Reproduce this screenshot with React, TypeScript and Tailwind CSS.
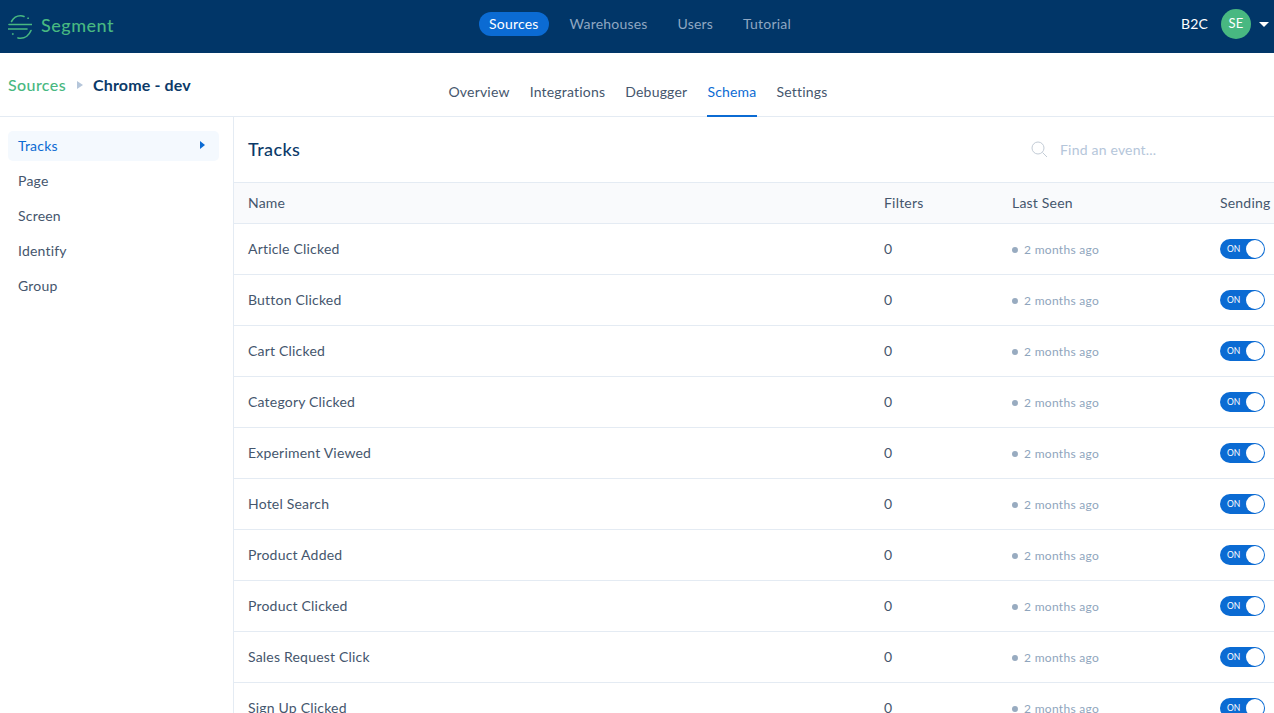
const EVENTS = [
  "Article Clicked",
  "Button Clicked",
  "Cart Clicked",
  "Category Clicked",
  "Experiment Viewed",
  "Hotel Search",
  "Product Added",
  "Product Clicked",
  "Sales Request Click",
  "Sign Up Clicked",
];

const TOP_NAV = ["Warehouses", "Users", "Tutorial"];
const TABS = ["Overview", "Integrations", "Debugger", "Schema", "Settings"];
const SIDE = ["Tracks", "Page", "Screen", "Identify", "Group"];

function Logo() {
  return (
    <svg width="24" height="24" viewBox="0 0 24 24" fill="none" stroke="#48b881" strokeWidth="1.6" strokeLinecap="round">
      <path d="M1 9.500H23.500" />
      <path d="M0.500 14H19" />
      <path d="M3.500 6.500C5.500 2.800 9 .8 12.500 .8c1.300 0 2.500.2 3.500.6" />
      <path d="M23 15.500C21.200 20 17 23.200 12.500 23.200c-1 0-1.800-.1-2.500-.3" />
      <circle cx="20" cy="3.200" r="0.500" fill="#48b881" strokeWidth="0.800" />
      <circle cx="4.700" cy="19" r="0.500" fill="#48b881" strokeWidth="0.800" />
    </svg>
  );
}

function Toggle() {
  return (
    <div className="flex h-[20px] w-[45px] items-center justify-between rounded-full bg-[#0b6bd3] pl-[7px] pr-[1px]">
      <span className="text-[8.500px] leading-none tracking-normal text-white">ON</span>
      <span className="h-[18px] w-[18px] rounded-full bg-white" />
    </div>
  );
}

export default function App() {
  return (
    <div className="h-[713px] w-[1274px] overflow-hidden bg-white font-['Lato',sans-serif] text-[14px] tracking-[0.2px] text-[#45566d]">
      {/* top bar */}
      <header className="relative flex h-[53px] items-center justify-center bg-[#013668] pb-[5px] pr-[4px]">
        <div className="absolute left-[8px] top-[12px] flex items-center gap-[9px]">
          <Logo />
          <span className="pb-[2px] text-[18px] font-medium tracking-[0.5px] text-[#48b881]">Segment</span>
        </div>
        <nav className="flex h-[24px] items-center gap-[30px] text-[#8fa7c2]">
          <span className="-mr-[9px] flex h-[24px] items-center rounded-full bg-[#0b6bd3] px-[10px] pb-px text-white">Sources</span>
          {TOP_NAV.map(item => (
            <span key={item} className="pb-px">{item}</span>
          ))}
        </nav>
        <div className="absolute right-[5px] top-[9px] flex items-center text-white">
          <span className="mr-[13px] pb-[2px]">B2C</span>
          <span className="flex h-[30px] w-[30px] items-center justify-center rounded-full bg-[#48b881] text-[13px]">SE</span>
          <span className="ml-[8px] h-0 w-0 border-x-[5px] border-t-[5px] border-x-transparent border-t-white" />
        </div>
      </header>

      {/* sub header */}
      <div className="relative flex h-[64px] justify-center border-b border-[#e4ebf3] pl-[2px]">
        <div className="absolute left-[8px] top-[20px] flex items-center text-[16px] tracking-[0.4px]">
          <span className="font-medium text-[#48b881]">Sources</span>
          <span className="ml-[11px] mr-[10px] h-0 w-0 border-y-[4px] border-l-[6px] border-y-transparent border-l-[#b5c6da]" />
          <span className="font-bold tracking-[0.15px] text-[#0b3a69]">Chrome - dev</span>
        </div>
        <div className="flex items-stretch gap-[20px] pt-[28px]">
          {TABS.map(tab => (
            <span
              key={tab}
              className={tab === "Schema" ? "-mb-px border-b-2 border-[#0b6bd3] text-[#0b6bd3]" : ""}
            >
              {tab}
            </span>
          ))}
        </div>
      </div>

      <div className="flex">
        {/* sidebar */}
        <aside className="h-[596px] w-[234px] shrink-0 border-r border-[#e4ebf3] px-[8px] pt-[14px]">
          {SIDE.map(item => (
            <div
              key={item}
              className={
                item === "Tracks"
                  ? "flex h-[30px] w-[211px] items-center justify-between rounded-[5px] bg-[#f4f9fe] pb-[2px] pl-[10px] pr-[14px] text-[#0b6bd3]"
                  : "mt-[5px] flex h-[30px] items-center pb-[2px] pl-[10px]"
              }
            >
              {item}
              {item === "Tracks" && (
                <span className="h-0 w-0 border-y-[4px] border-l-[5px] border-y-transparent border-l-[#0b6bd3]" />
              )}
            </div>
          ))}
        </aside>

        {/* table */}
        <main className="min-w-0 flex-1">
          <div className="flex h-[66px] items-center justify-between border-b border-[#e4ebf3] pl-[14px]">
            <h1 className="text-[18px] font-medium tracking-[0.4px] text-[#0b3a69]">Tracks</h1>
            <div className="flex w-[243px] items-center gap-[12px] text-[#b5c6da]">
              <svg width="17" height="17" viewBox="0 0 17 17" fill="none" stroke="#c3ccd6" strokeWidth="1">
                <circle cx="7" cy="7" r="6" />
                <path d="M11.500 11.500L16 16" />
              </svg>
              <span>Find an event...</span>
            </div>
          </div>
          <div className="grid h-[41px] grid-cols-[636px_128px_208px_1fr] items-center border-b border-[#e4ebf3] bg-[#f9fafc] pb-[2px] pl-[14px]">
            <span>Name</span>
            <span>Filters</span>
            <span>Last Seen</span>
            <span>Sending</span>
          </div>
          {EVENTS.map(name => (
            <div key={name} className="grid h-[51px] grid-cols-[636px_128px_208px_1fr] items-center border-b border-[#e4ebf3] pl-[14px]">
              <span className="pb-[2px]">{name}</span>
              <span className="pb-[2px]">0</span>
              <span className="flex items-center gap-[6px] pt-[2px] text-[12px] tracking-[0.3px] text-[#8fa5bd]">
                <span className="h-[6px] w-[6px] rounded-full bg-[#98abc0]" />2 months ago
              </span>
              <Toggle />
            </div>
          ))}
        </main>
      </div>
    </div>
  );
}
